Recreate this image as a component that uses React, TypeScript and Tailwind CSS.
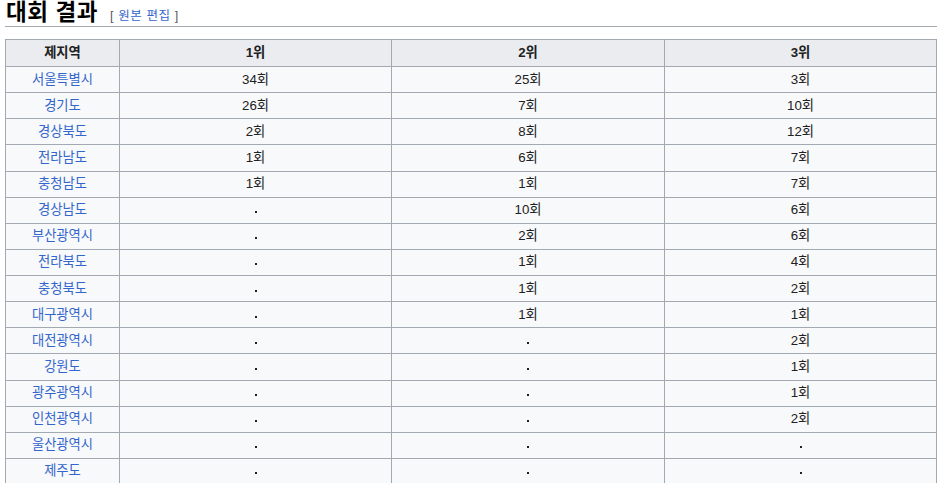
const rows: [string, string, string, string][] = [
  ["서울특별시", "34회", "25회", "3회"],
  ["경기도", "26회", "7회", "10회"],
  ["경상북도", "2회", "8회", "12회"],
  ["전라남도", "1회", "6회", "7회"],
  ["충청남도", "1회", "1회", "7회"],
  ["경상남도", "·", "10회", "6회"],
  ["부산광역시", "·", "2회", "6회"],
  ["전라북도", "·", "1회", "4회"],
  ["충청북도", "·", "1회", "2회"],
  ["대구광역시", "·", "1회", "1회"],
  ["대전광역시", "·", "·", "2회"],
  ["강원도", "·", "·", "1회"],
  ["광주광역시", "·", "·", "1회"],
  ["인천광역시", "·", "·", "2회"],
  ["울산광역시", "·", "·", "·"],
  ["제주도", "·", "·", "·"],
];

const cell = "border border-[#a2a9b1] px-[5px] py-[2.5px] leading-[20.13px] text-center";

// the middle dot is drawn a touch heavier than Liberation's "·"
function Val({ v }: { v: string }) {
  if (v === "·")
    return (
      <span className="relative inline-block w-[4px] text-transparent">
        ·
        <span className="absolute left-[1px] top-[11px] w-[2px] h-[2px] bg-[#202122]" />
      </span>
    );
  return <>{v}</>;
}

export default function App() {
  return (
    <div className="bg-white w-[940px] h-[483px] overflow-hidden pl-[5px] pr-[3px] text-[#202122] font-['Liberation_Sans','Noto_Sans_CJK_KR',sans-serif]">
      {/* section heading */}
      <h2 className="flex items-baseline gap-[12px] border-b border-[#a2a9b1] h-[27px] pl-[1px]">
        <span className="text-[22.5px] font-bold leading-[25px] tracking-[0.6px] text-black">대회 결과</span>
        <span className="text-[12.5px] text-[#54595d] tracking-[0.6px]">
          [ <a className="text-[#3366cc]">원본 편집</a> ]
        </span>
      </h2>

      <table className="mt-[12px] w-[931px] table-fixed border-collapse text-[13.3px] bg-[#f8f9fa]">
        <colgroup>
          <col className="w-[114px]" />
          <col className="w-[272px]" />
          <col className="w-[273px]" />
          <col className="w-[272px]" />
        </colgroup>
        <thead>
          <tr className="bg-[#eaecf0]">
            <th className="border border-[#a2a9b1] px-[5px] py-[3px] leading-[20px] font-bold">제지역</th>
            <th className="border border-[#a2a9b1] px-[5px] py-[3px] leading-[20px] font-bold">1위</th>
            <th className="border border-[#a2a9b1] px-[5px] py-[3px] leading-[20px] font-bold">2위</th>
            <th className="border border-[#a2a9b1] px-[5px] py-[3px] leading-[20px] font-bold">3위</th>
          </tr>
        </thead>
        <tbody>
          {rows.map((r) => (
            <tr key={r[0]}>
              <td className={cell}>
                <a className="text-[#3366cc]">{r[0]}</a>
              </td>
              <td className={cell}>
                <Val v={r[1]} />
              </td>
              <td className={cell}>
                <Val v={r[2]} />
              </td>
              <td className={cell}>
                <Val v={r[3]} />
              </td>
            </tr>
          ))}
        </tbody>
      </table>
    </div>
  );
}
